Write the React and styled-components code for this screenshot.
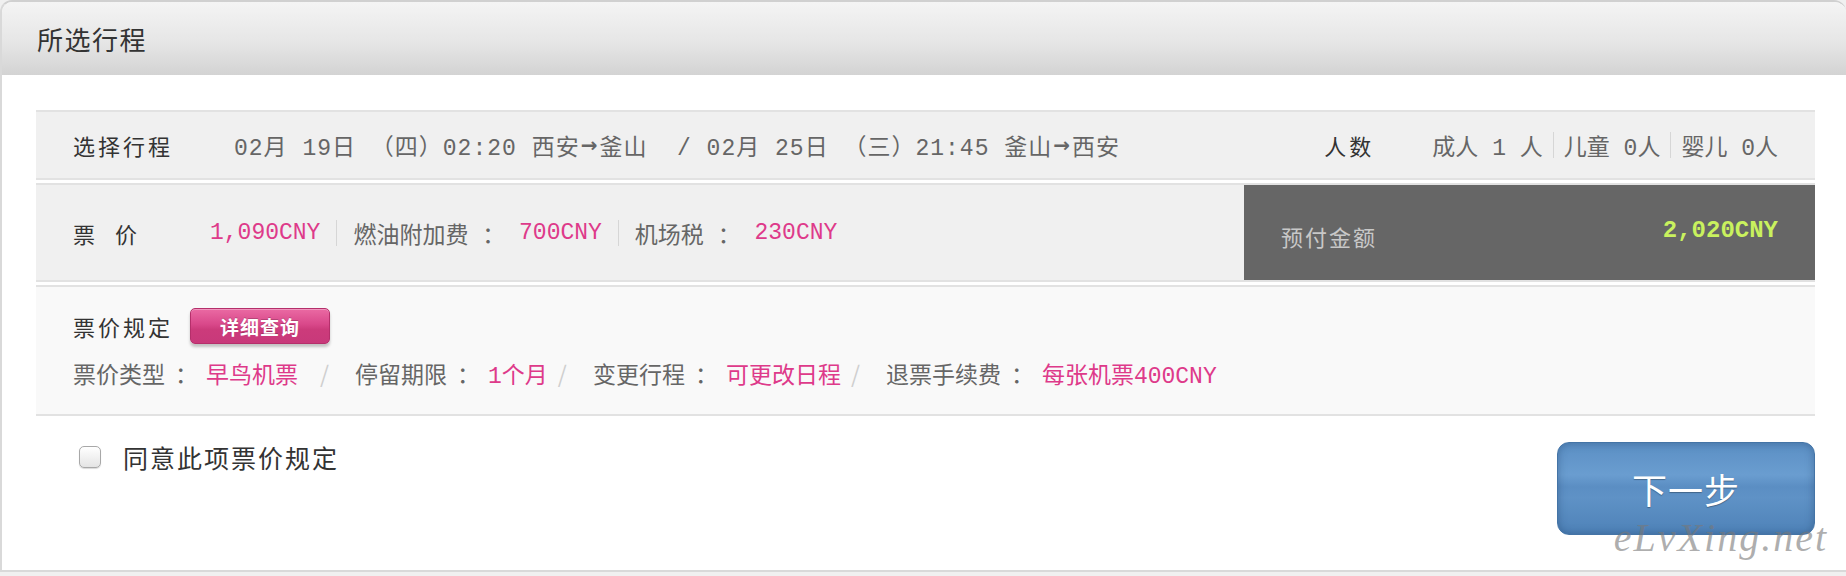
import React from "react";
import styled, { createGlobalStyle } from "styled-components";

const GlobalStyle = createGlobalStyle`
  *, *::before, *::after {
    box-sizing: border-box;
  }
  body {
    margin: 0;
    background: #f0f0f0;
    font-family: "Noto Sans CJK SC", "Noto Sans", sans-serif;
  }
`;

const Card = styled.div`
  position: relative;
  background: #fff;
  border: 2px solid #d9d9d9;
  border-right: none;
  border-top-color: #d0d0d0;
  border-radius: 12px 12px 0 0;
  overflow: hidden;
`;

const Header = styled.div`
  height: 73px;
  display: flex;
  align-items: center;
  padding-left: 35px;
  background: linear-gradient(#f4f4f4 0%, #e6e6e6 55%, #d3d3d3 100%);

  h2 {
    margin: 0;
    font-size: 26px;
    font-weight: 400;
    letter-spacing: 1.5px;
    color: #333;
  }
`;

const Content = styled.div`
  padding: 35px 31px 0 34px;
`;

const Row = styled.div`
  display: flex;
  align-items: ${(p) => (p.$column ? "stretch" : "center")};
  flex-direction: ${(p) => (p.$column ? "column" : "row")};
  height: ${(p) => p.$h}px;
  background: ${(p) => p.$bg || "#f0f0f0"};
  border-top: 2px solid #e2e2e2;
  border-bottom: 2px solid #e2e2e2;
  margin-bottom: 3px;
  padding: ${(p) => p.$pad || "0 37px"};
`;

const Label = styled.span`
  flex-shrink: 0;
  width: ${(p) => (p.$w ? p.$w + "px" : "auto")};
  font-size: 22px;
  letter-spacing: 3px;
  word-spacing: 9px;
  color: #333;
`;

const Info = styled.span`
  font-family: "Liberation Mono", "Noto Sans CJK SC", monospace;
  font-size: 23px;
  color: #666;
  white-space: pre;
  display: flex;
  align-items: center;
  letter-spacing: ${(p) => p.$ls || 0}px;
`;

const Arrow = styled.span`
  font-family: "DejaVu Sans", sans-serif;
  font-weight: 700;
  font-size: 20px;
  margin: 0 1px;
`;

const Pink = styled.span`
  color: #de3a8a;
`;

const Sep = styled.i`
  display: inline-block;
  width: 1px;
  height: 26px;
  background: #d6d6d6;
  margin: 0 ${(p) => p.$m || 16}px;
`;

const People = styled.div`
  margin-left: auto;
  display: flex;
  align-items: center;
  gap: 58px;
`;

const PriceLeft = styled.div`
  flex: 1;
  display: flex;
  align-items: center;
  padding-left: 37px;
`;

const PayBox = styled.div`
  width: 571px;
  align-self: stretch;
  background: #666;
  display: flex;
  align-items: center;
  justify-content: space-between;
  padding: 0 37px;

  span {
    font-size: 22px;
    letter-spacing: 2px;
    color: #c8c8c8;
    margin-top: 6px;
  }
  b {
    font-family: "Liberation Mono", monospace;
    font-size: 24px;
    color: #c9f15e;
    margin-top: -4px;
  }
`;

const RuleHead = styled.div`
  display: flex;
  align-items: center;
  height: 38px;
`;

const DetailButton = styled.button`
  margin-left: 17px;
  width: 140px;
  height: 36px;
  border: 1px solid #b52f6b;
  border-radius: 5px;
  background: linear-gradient(#ea6aa3 0%, #d9488a 45%, #cc3b7b 60%, #c8397a 100%);
  box-shadow: 0 3px 3px rgba(0, 0, 0, 0.22), inset 0 1px 0 rgba(255, 255, 255, 0.3);
  color: #fff;
  font-family: "Noto Sans CJK SC", sans-serif;
  font-size: 19px;
  font-weight: 700;
  letter-spacing: 1px;
  text-shadow: 0 -1px 0 rgba(0, 0, 0, 0.2);
`;

const RuleLine = styled(Info)`
  margin-top: 13px;
  height: 30px;
  font-family: "Noto Sans CJK SC", sans-serif;
  font-size: 23px;

  ${Pink} {
    font-family: "Liberation Mono", "Noto Sans CJK SC", monospace;
  }
`;

const Colon = styled.span`
  margin: 0 8px 0 10px;
`;

const Slash = styled.span`
  color: #cfcfcf;
  margin: 0 ${(p) => p.$r || 26}px 0 ${(p) => p.$l || 10}px;
`;

const BottomBar = styled.div`
  display: flex;
  justify-content: space-between;
  align-items: flex-start;
  height: 151px;
`;

const Agree = styled.label`
  display: flex;
  align-items: center;
  gap: 22px;
  margin: 20px 0 0 43px;
  font-size: 25px;
  letter-spacing: 2px;
  color: #333;

  input {
    appearance: none;
    margin: 0;
    width: 22px;
    height: 22px;
    border: 1px solid #a8a8a8;
    border-radius: 5px;
    background: linear-gradient(#ffffff, #e4e4e4);
    box-shadow: 0 1px 1px rgba(0, 0, 0, 0.15);
  }
`;

const NextButton = styled.button`
  margin-top: 23px;
  width: 258px;
  height: 93px;
  border: 1px solid #4474a6;
  border-radius: 12px;
  background: linear-gradient(
    #5b8fc4 0%,
    #6a9dd0 35%,
    #5b8ec3 48%,
    #5f92c6 60%,
    #4e82b8 100%
  );
  box-shadow: inset 0 0 8px rgba(20, 50, 90, 0.35);
  color: #fff;
  font-family: "Noto Sans CJK SC", sans-serif;
  font-size: 35px;
  letter-spacing: 1px;
  text-shadow: 0 1px 1px rgba(0, 0, 0, 0.3);
`;

const Watermark = styled.div`
  position: absolute;
  right: 18px;
  bottom: 12px;
  font-family: "Liberation Serif", serif;
  font-style: italic;
  font-size: 40px;
  line-height: 1;
  letter-spacing: 2px;
  color: rgba(120, 120, 120, 0.6);
  pointer-events: none;
`;

const App = () => {
  return (
    <>
      <GlobalStyle />
      <Card>
        <Header>
          <h2>所选行程</h2>
        </Header>
        <Content>
          <Row $h={70}>
            <Label $w={161}>选择行程</Label>
            <Info $ls={1}>
              02月 19日 （四）02:20 西安<Arrow>→</Arrow>釜山  / 02月 25日 （三）21:45 釜山
              <Arrow>→</Arrow>西安
            </Info>
            <People>
              <Label>人数</Label>
              <Info>
                成人 1 人<Sep $m={10} />儿童 0人<Sep $m={10} />婴儿 0人
              </Info>
            </People>
          </Row>

          <Row $h={99} $pad="0">
            <PriceLeft>
              <Label $w={137}>票 价</Label>
              <Info>
                <Pink>1,090CNY</Pink>
                <Sep />
                燃油附加费 ： <Pink>700CNY</Pink>
                <Sep />
                机场税 ： <Pink>230CNY</Pink>
              </Info>
            </PriceLeft>
            <PayBox>
              <span>预付金额</span>
              <b>2,020CNY</b>
            </PayBox>
          </Row>

          <Row $h={131} $bg="#f9f9f9" $column $pad="20px 37px 0">
            <RuleHead>
              <Label>票价规定</Label>
              <DetailButton>详细查询</DetailButton>
            </RuleHead>
            <RuleLine>
              票价类型<Colon>：</Colon>
              <Pink>早鸟机票</Pink>
              <Slash $l={22}>/</Slash>
              停留期限<Colon>：</Colon>
              <Pink>1个月</Pink>
              <Slash>/</Slash>
              变更行程<Colon>：</Colon>
              <Pink>可更改日程</Pink>
              <Slash>/</Slash>
              退票手续费<Colon>：</Colon>
              <Pink>每张机票400CNY</Pink>
            </RuleLine>
          </Row>

          <BottomBar>
            <Agree>
              <input type="checkbox" />
              同意此项票价规定
            </Agree>
            <NextButton>下一步</NextButton>
          </BottomBar>
        </Content>
        <Watermark>eLvXing.net</Watermark>
      </Card>
    </>
  );
};

export default App;
